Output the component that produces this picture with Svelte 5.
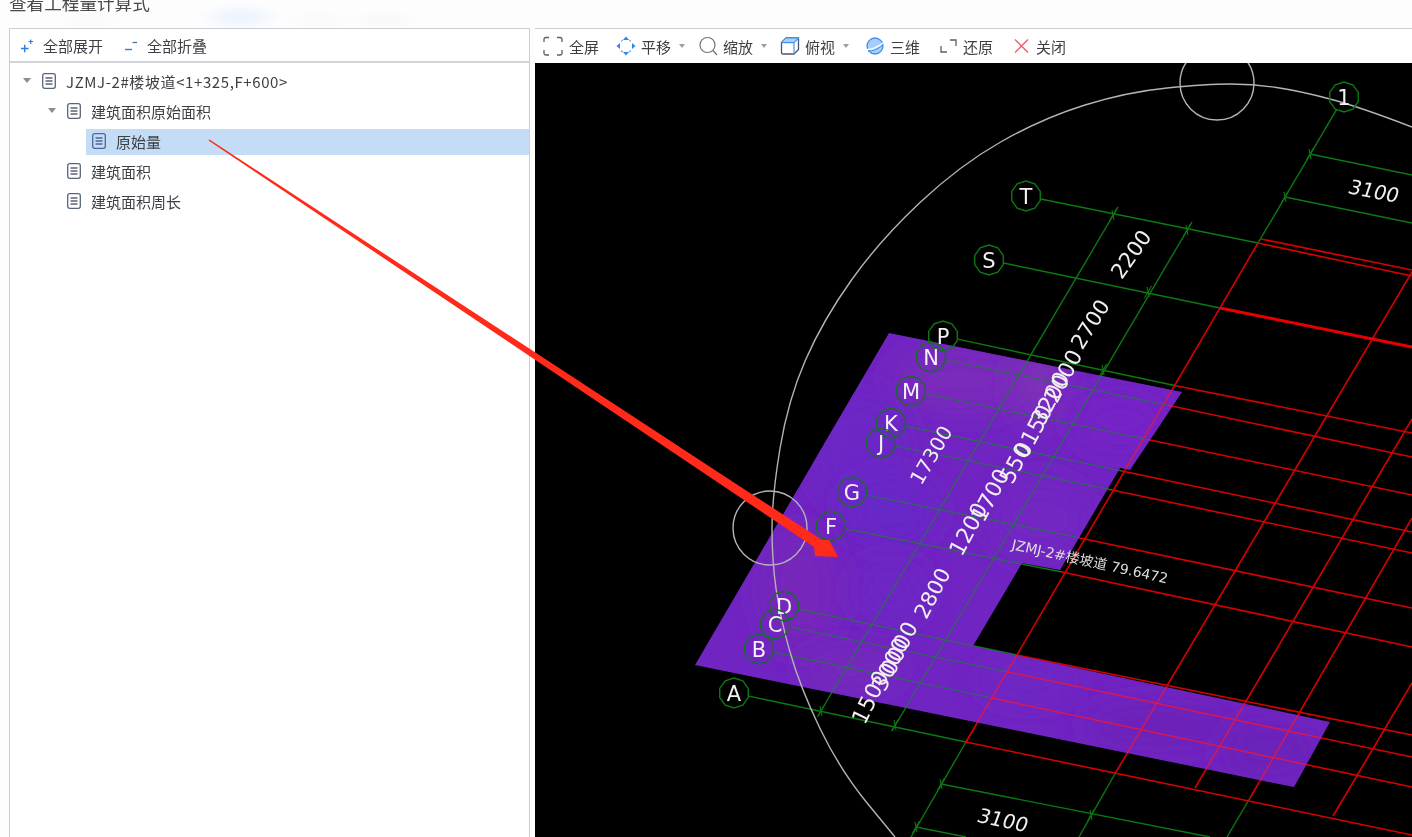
<script lang="ts">
  const tree = [
    { label: 'JZMJ-2#楼坡道<1+325,F+600>', depth: 0, open: true },
    { label: '建筑面积原始面积', depth: 1, open: true },
    { label: '原始量', depth: 2, selected: true },
    { label: '建筑面积', depth: 1 },
    { label: '建筑面积周长', depth: 1 },
  ];

  // axis lines: bubble centre, point where green turns red, edge of the drawing
  const rows = [
    { n: 'T', a: [1026, 196], b: [1258, 243], c: [1412, 272] },
    { n: 'S', a: [989, 260], b: [1220, 308], c: [1412, 347], heavy: true },
    { n: 'P', a: [943, 336], b: [1177, 386], c: [1412, 433] },
    { n: 'N', a: [931, 357], b: [1167, 405], c: [1412, 457], dim: true },
    { n: 'M', a: [911, 391], b: [1150, 440], c: [1412, 495], dim: true },
    { n: 'K', a: [891, 423], b: [1122, 471], c: [1412, 532], dim: true },
    { n: 'J', a: [881, 443], b: [1112, 490], c: [1412, 553], dim: true },
    { n: 'G', a: [852, 492], b: [1080, 538], c: [1412, 608], dim: true },
    { n: 'F', a: [831, 526], b: [1062, 572], c: [1412, 647], dim: true },
    { n: 'D', a: [784, 606], b: [1017, 655], c: [1412, 735], dim: true },
    { n: 'C', a: [775, 624], b: [1008, 672], c: [1412, 757], dim: true },
    { n: 'B', a: [759, 649], b: [992, 698], c: [1412, 787], dim: true },
    { n: 'A', a: [734, 693], b: [966, 742], c: [1412, 835] },
  ];

  const trim = (a: number[], b: number[], r = 15) => {
    const d = Math.hypot(b[0] - a[0], b[1] - a[1]);
    return [a[0] + ((b[0] - a[0]) * r) / d, a[1] + ((b[1] - a[1]) * r) / d];
  };

  const greens = [
    ...rows.map((r) => [...trim(r.a, r.b), ...r.b]),
    [...trim([1344, 97], [1258, 243]), 1258, 243],
    [1192, 222, 892, 731],
    [1118, 207, 818, 716],
    [966, 742, 911, 837],
    [1116, 772, 1079, 837],
    [1250, 798, 1227, 837],
    [1310, 154, 1412, 175],
    [1285, 197, 1412, 223],
    [941, 784, 1210, 837],
    [916, 827, 966, 837],
  ];

  const reds = [
    ...rows.filter((r) => r.n !== 'T' && !r.heavy).map((r) => [...r.b, ...r.c]),
    [1258, 243, 1412, 276],
    [1261, 239, 1412, 270],
    [1258, 243, 966, 742],
    [1412, 272, 1116, 772],
    [1412, 419, 1195, 788],
    [1412, 518, 1250, 798],
    [1412, 683, 1333, 816],
  ];

  const ticks = [
    [1113, 215], [1187, 230], [1148, 292], [1103, 370], [1092, 390], [1072, 425], [1052, 457],
    [1040, 475], [1012, 524], [992, 559], [943, 639], [934, 657], [919, 683], [895, 725],
    [821, 711], [941, 784], [1091, 815], [916, 827], [1310, 154], [1285, 197],
  ];

  const purple = '889,333 1182,392 1130,470 1120,468 1060,570 1022,563 973,646 1330,722 1294,787 695,665';

  const blobs = [
    { x: 960, y: 380, rx: 70, ry: 32, fill: '#7a2abb' },
    { x: 1040, y: 385, rx: 24, ry: 36, fill: '#8030b8' },
    { x: 1120, y: 420, rx: 50, ry: 30, fill: '#7624c8' },
    { x: 860, y: 450, rx: 50, ry: 60, fill: '#6c25c6' },
    { x: 890, y: 510, rx: 46, ry: 36, fill: '#6728c8' },
    { x: 800, y: 590, rx: 40, ry: 60, fill: '#7628ba' },
    { x: 890, y: 590, rx: 36, ry: 30, fill: '#6c26c4' },
    { x: 1040, y: 520, rx: 50, ry: 40, fill: '#7226c2' },
    { x: 850, y: 670, rx: 50, ry: 20, fill: '#7629ba' },
    { x: 1030, y: 680, rx: 50, ry: 20, fill: '#6e27c4' },
    { x: 1160, y: 725, rx: 80, ry: 22, fill: '#6c22b8' },
    { x: 1270, y: 750, rx: 50, ry: 30, fill: '#6a20b8' },
  ];

  const labels = [
    { t: '3100', x: 1374, y: 191, a: 11, s: 20, k: -8 },
    { t: '2200', x: 1131, y: 254, a: -55, s: 21, k: 0 },
    { t: '2700', x: 1090, y: 324, a: -58, s: 21, k: 0 },
    { t: '17300', x: 931, y: 455, a: -60, s: 20, k: 0 },
    { t: '2000', x: 1063, y: 376, a: -62, s: 22, k: 0 },
    { t: '3200', x: 1050, y: 398, a: -62, s: 22, k: 0 },
    { t: '0150', x: 1033, y: 431, a: -62, s: 22, k: 0 },
    { t: '550', x: 1015, y: 463, a: -62, s: 22, k: 0 },
    { t: '1700', x: 990, y: 495, a: -62, s: 22, k: 0 },
    { t: '1200', x: 968, y: 529, a: -62, s: 22, k: 0 },
    { t: '2800', x: 932, y: 593, a: -62, s: 21, k: 0 },
    { t: '0000', x: 899, y: 648, a: -64, s: 22, k: 0 },
    { t: '3000', x: 890, y: 664, a: -64, s: 22, k: 0 },
    { t: '1500', x: 870, y: 697, a: -64, s: 22, k: 0 },
    { t: '3100', x: 1003, y: 820, a: 12, s: 20, k: -8 },
  ];

  const smooth = (pts: number[][]) => {
    let d = `M${pts[0]}`;
    for (let i = 1; i < pts.length - 1; i++) {
      const mx = (pts[i][0] + pts[i + 1][0]) / 2;
      const my = (pts[i][1] + pts[i + 1][1]) / 2;
      d += ` Q${pts[i]} ${mx},${my}`;
    }
    return d + ` L${pts[pts.length - 1]}`;
  };

  const bigCircle = smooth([
    [1412, 127], [1360, 107], [1300, 91], [1253, 84], [1207, 84], [1127, 92], [1043, 118], [960, 165],
    [880, 240], [823, 320], [788, 400], [772, 497], [772, 560], [780, 617], [800, 687], [840, 770], [895, 837],
  ]);

  const decagon = (x: number, y: number, r = 15) =>
    Array.from({ length: 10 }, (_, i) => {
      const t = (Math.PI * 2 * i) / 10 + Math.PI / 10;
      return `${x + r * Math.cos(t)},${y + r * Math.sin(t)}`;
    }).join(' ');
</script>

<div class="page">
  <header class="title"><span>查看工程量计算式</span></header>

  <main class="body">
    <section class="left">
      <div class="bar">
        <button class="act">
          <svg width="14" height="14" viewBox="0 0 14 14">
            <path d="M1 9.500h7.500M4.700 5.700v7.500" stroke="#2a7de1" stroke-width="1.400" fill="none" />
            <path d="M8.500 2.500h4.500M10.700 .5v4.500" stroke="#2a7de1" stroke-width="1.200" fill="none" />
          </svg>
          全部展开
        </button>
        <button class="act">
          <svg width="14" height="14" viewBox="0 0 14 14">
            <path d="M1 10.500h7" stroke="#2a7de1" stroke-width="1.400" fill="none" />
            <path d="M8.500 3.500h4.500" stroke="#4b6d9c" stroke-width="1.200" fill="none" />
          </svg>
          全部折叠
        </button>
      </div>
      <ul class="tree">
        {#each tree as node}
          <li class="row" style="padding-left: {8 + node.depth * 25}px">
            <span class="caret">
              {#if node.open}<i></i>{/if}
            </span>
            <span class="item" class:selected={node.selected} class:root={node.depth === 0}>
              <svg width="14" height="16" viewBox="0 0 14 16" class="doc">
                <rect x=".7" y=".7" width="12.600" height="14.600" rx="2" />
                <path d="M3.500 5h7M3.500 8h7M3.500 11h7" />
              </svg>
              <span>{node.label}</span>
            </span>
          </li>
        {/each}
      </ul>
    </section>

    <section class="right">
      <div class="bar tools">
        <button class="tool full">
          <svg class="ico" width="20" height="20" viewBox="0 0 20 20" fill="none" stroke="#5b5f66" stroke-width="1.300">
            <path d="M1 6V3.500Q1 1.500 3 1.500H6M14 1.500h3Q19 1.500 19 3.500V6M19 14v3Q19 19 17 19h-3M6 19H3Q1 19 1 17v-3" />
          </svg>
          全屏
        </button>
        <button class="tool drop">
          <svg class="ico" width="20" height="20" viewBox="0 0 20 20" fill="#2e86f0">
            <path d="M10 .5l3 3.500H7zM10 19.500l3-3.500H7zM.5 10L4 7v6zM19.500 10L16 7v6z" />
            <path d="M5 5.500Q6 4.500 7 4M13 4q1 .5 2 1.500M15 14.500q-1 1-2 1.500M7 16q-1-.5-2-1.500" fill="none" stroke="#6aa8f4" stroke-width="1.200" />
          </svg>
          平移<span class="drop-mark"><i></i></span>
        </button>
        <button class="tool drop">
          <svg class="ico" width="20" height="20" viewBox="0 0 20 20" fill="none" stroke="#6e7278" stroke-width="1.200">
            <circle cx="9.500" cy="9" r="7.500" />
            <path d="M15 14.500l4 4.500" />
          </svg>
          缩放<span class="drop-mark"><i></i></span>
        </button>
        <button class="tool drop wide">
          <svg class="ico" width="20" height="20" viewBox="0 0 20 20" fill="none">
            <path d="M1.500 6.500L6 2h12.500v11.500L14 18H3Q1.500 18 1.500 16.500z" stroke="#4f5560" stroke-width="1.300" />
            <path d="M1.500 6.500H14L18.500 2M14 6.500V18" stroke="#4f9ef5" stroke-width="1.300" />
            <path d="M6 2h12.500L14 6.500H1.500z" fill="#a9cff9" stroke="#3f8ff0" stroke-width="1" />
          </svg>
          俯视<span class="drop-mark"><i></i></span>
        </button>
        <button class="tool">
          <svg class="ico" width="20" height="20" viewBox="0 0 20 20">
            <circle cx="10" cy="10" r="8" fill="#a9cdf7" stroke="#3f8ff0" stroke-width="1.300" />
            <path d="M1.500 13.500Q9 14 18 7" fill="none" stroke="#fff" stroke-width="1.400" />
            <path d="M3 15Q10 15.500 18 9" fill="none" stroke="#3f8ff0" stroke-width="1" />
          </svg>
          三维
        </button>
        <button class="tool">
          <svg class="ico" width="20" height="20" viewBox="0 0 20 20" fill="none" stroke="#5b5f66" stroke-width="1.300">
            <path d="M3 10v6h6M12 4h6v6" />
          </svg>
          还原
        </button>
        <button class="tool">
          <svg class="ico" width="20" height="20" viewBox="0 0 20 20" fill="none" stroke="#f2616b" stroke-width="1.500">
            <path d="M4 3.500l13 13M17 3.500l-13 13" />
          </svg>
          关闭
        </button>
      </div>

      <svg class="cad" viewBox="535 63 877 774" preserveAspectRatio="xMinYMin slice">
        <defs>
          <clipPath id="slab"><polygon points={purple} /></clipPath>
          <filter id="soft" x="-60%" y="-60%" width="220%" height="220%"><feGaussianBlur stdDeviation="16" /></filter>
        </defs>

        {#each greens as l}
          <line x1={l[0]} y1={l[1]} x2={l[2]} y2={l[3]} class="g" />
        {/each}
        {#each ticks as p}
          <path d="M{p[0] + 3.500},{p[1] - 6}L{p[0] - 3.500},{p[1] + 6}M{p[0] - 1},{p[1] - 5}L{p[0] + 1},{p[1] + 5}" class="g thin" />
        {/each}
        {#each reds as l}
          <line x1={l[0]} y1={l[1]} x2={l[2]} y2={l[3]} class="r" />
        {/each}
        <line x1="1220" y1="308" x2="1412" y2="347" class="r heavy" />

        <polygon points={purple} fill="#7024c2" />
        <g clip-path="url(#slab)">
          {#each blobs as b}
            <ellipse cx={b.x} cy={b.y} rx={b.rx} ry={b.ry} fill={b.fill} filter="url(#soft)" />
          {/each}
          {#each greens as l}
            <line x1={l[0]} y1={l[1]} x2={l[2]} y2={l[3]} class="g-on" />
          {/each}
          {#each reds as l}
            <line x1={l[0]} y1={l[1]} x2={l[2]} y2={l[3]} class="r-on" />
          {/each}
        </g>

        <circle cx="1217" cy="83" r="37" class="ring" />
        <circle cx="770" cy="528" r="37" class="ring" />
        <path d={bigCircle} class="ring" />

        {#each rows as r}
          <polygon points={decagon(r.a[0], r.a[1])} class="bubble" class:dim={r.dim} />
          <text x={r.a[0]} y={r.a[1] + 7.500} class="mark">{r.n}</text>
        {/each}
        <polygon points={decagon(1344, 97)} class="bubble" />
        <text x="1344" y="104.500" class="mark">1</text>

        {#each labels as l}
          <text
            class="dim-text"
            font-size={l.s}
            dy=".36em"
            transform="translate({l.x} {l.y}) rotate({l.a}) skewX({l.k})">{l.t}</text>
        {/each}
        <text class="tag" transform="translate(1011 549) rotate(12.500)">JZMJ-2#楼坡道 79.6472</text>
      </svg>
    </section>
  </main>

  <svg class="arrow" width="1412" height="837" viewBox="0 0 1412 837">
    <polygon points="208.500,140.500 209.500,139.500 822,540 829,540 838,557 815,556 814,547" fill="#ff2a1a" />
  </svg>
</div>

<style>
  :global(body) {
    margin: 0;
    background: #fff;
  }
  .page {
    position: relative;
    width: 1412px;
    height: 837px;
    overflow: hidden;
    display: flex;
    flex-direction: column;
    font-family: 'Noto Sans CJK SC', 'Liberation Sans', sans-serif;
    color: #3c3f44;
    font-size: 15px;
    filter: blur(0.4px);
    background: #fdfdfd;
  }
  .title {
    height: 28px;
    flex: none;
    overflow: hidden;
    padding-left: 9px;
    background:
      radial-gradient(ellipse 44px 14px at 240px 17px, #eff5fd 30%, transparent),
      radial-gradient(ellipse 36px 10px at 90px 20px, #fafafa 30%, transparent),
      radial-gradient(ellipse 36px 10px at 385px 20px, #f9f9f9 30%, transparent),
      radial-gradient(ellipse 36px 10px at 320px 20px, #fafafa 30%, transparent),
      #fdfdfd;
  }
  .title span {
    display: block;
    margin-top: -9px;
    font-size: 17.600px;
    line-height: 24px;
    color: #4a4a4a;
  }
  .body {
    flex: 1;
    min-height: 0;
    display: flex;
    gap: 5px;
    padding-left: 9px;
  }
  .left {
    flex: none;
    width: 521px;
    box-sizing: border-box;
    background: #fff;
    border: 1px solid #c9ced6;
    border-bottom: 0;
  }
  .right {
    flex: 1;
    min-width: 0;
    display: flex;
    flex-direction: column;
    background: #fff;
    border-top: 1px solid #c9ced6;
  }
  .bar {
    box-sizing: border-box;
    height: 34px;
    display: flex;
    align-items: center;
    border-bottom: 2px solid #d0d3d9;
    padding-left: 10px;
    flex: none;
  }
  .tools {
    border-bottom: 0;
    padding-left: 8px;
    height: 34px;
    padding-top: 0;
  }
  button {
    all: unset;
    display: flex;
    align-items: center;
    font: inherit;
    white-space: nowrap;
  }
  .act {
    gap: 9px;
    margin-right: 21px;
    padding-top: 1px;
  }
  .tool {
    padding-right: 18px;
  }
  .tool.full {
    padding-right: 17px;
  }
  .tool.full .ico {
    margin-right: 6px;
  }
  .tool.drop {
    padding-right: 8px;
  }
  .tool.wide {
    padding-right: 11px;
  }
  .ico {
    margin-right: 5px;
  }
  .drop-mark {
    width: 19px;
    height: 10px;
    position: relative;
  }
  .drop-mark i {
    position: absolute;
    left: 8px;
    top: 3px;
    border: 3px solid transparent;
    border-top: 4px solid #9a9ea6;
    border-bottom: 0;
  }
  .tree {
    list-style: none;
    margin: 0;
    padding: 4px 0 0;
  }
  .row {
    height: 30px;
    display: flex;
    align-items: center;
  }
  .caret {
    width: 18px;
    height: 10px;
    flex: none;
    position: relative;
    top: -1px;
  }
  .caret i {
    position: absolute;
    left: 5px;
    top: 2px;
    border: 4px solid transparent;
    border-top: 5px solid #8a8d92;
    border-bottom: 0;
  }
  .item {
    flex: 1;
    box-sizing: border-box;
    height: 26px;
    display: flex;
    align-items: center;
    gap: 10px;
    padding: 0 0 2px 6px;
  }
  .item.root {
    letter-spacing: 0.6px;
  }
  .item.selected {
    background: #c5dcf7;
  }
  .doc {
    fill: none;
    stroke: #5a6478;
    stroke-width: 1.300;
  }
  .selected .doc {
    stroke: #4a6a94;
  }
  .cad {
    flex: 1;
    min-height: 0;
    width: 100%;
    background: #000;
    display: block;
  }
  .g {
    stroke: #0b7a12;
    stroke-width: 1.400;
    fill: none;
  }
  .g.thin {
    stroke-width: 1.100;
  }
  .r {
    stroke: #d80000;
    stroke-width: 1.600;
  }
  .r.heavy {
    stroke: #e80000;
    stroke-width: 3;
  }
  .g-on {
    stroke: #2f6a58;
    stroke-width: 1.200;
  }
  .r-on {
    stroke: #d81850;
    stroke-width: 1.400;
  }
  .ring {
    fill: none;
    stroke: #b4b4b4;
    stroke-width: 1.400;
  }
  .bubble {
    fill: none;
    stroke: #0b7a12;
    stroke-width: 1.400;
  }
  .bubble.dim {
    stroke: #1a6a30;
  }
  .mark {
    fill: #f2f2f2;
    font-family: 'DejaVu Sans', sans-serif;
    font-size: 21px;
    text-anchor: middle;
  }
  .dim-text {
    fill: #f0f0f0;
    font-family: 'DejaVu Sans', sans-serif;
    text-anchor: middle;
  }
  .tag {
    fill: #dedede;
    font-family: 'DejaVu Sans', 'Noto Sans CJK SC', sans-serif;
    font-size: 14px;
  }
  .arrow {
    position: absolute;
    left: 0;
    top: 0;
    pointer-events: none;
  }
</style>
